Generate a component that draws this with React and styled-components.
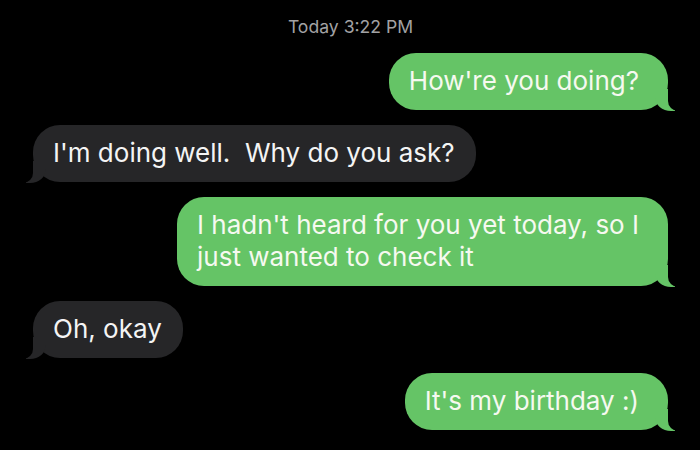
import React from 'react';
import styled, { createGlobalStyle, css } from 'styled-components';

const messages = [
  { id: 1, sent: true, text: "How're you doing?" },
  { id: 2, sent: false, text: "I'm doing well.  Why do you ask?" },
  { id: 3, sent: true, text: "I hadn't heard for you yet today, so I\njust wanted to check it" },
  { id: 4, sent: false, text: 'Oh, okay' },
  { id: 5, sent: true, text: "It's my birthday :)" },
];

export default function App() {
  return (
    <>
      <GlobalStyle />
      <Thread>
        <Stamp>
          Today <b>3:22 PM</b>
        </Stamp>
        {messages.map((m) => (
          <Bubble key={m.id} $sent={m.sent}>
            {m.text}
          </Bubble>
        ))}
      </Thread>
    </>
  );
}

const GlobalStyle = createGlobalStyle`
  html, body {
    margin: 0;
    background: #000;
  }
  #root {
    height: 450px;
  }
`;

const Thread = styled.div`
  display: flex;
  flex-direction: column;
  gap: 15px;
  height: 450px;
  box-sizing: border-box;
  padding: 17px 32px 0 33px;
  background: #000;
  overflow: hidden;
  font-family: Inter, 'Liberation Sans', sans-serif;
`;

const Stamp = styled.div`
  align-self: center;
  margin-bottom: 1px;
  font-size: 17.6px;
  line-height: 20px;
  color: #a2a2a4;

  b {
    font-weight: 400;
  }
`;

// tail drawn with two pseudo elements: a coloured blob and a black cut-out
const sentTail = css`
  background: #65c466;
  color: #f6f9f0;
  align-self: flex-end;
  padding-right: 29px;

  &::before {
    right: -7px;
    background: #65c466;
    border-bottom-left-radius: 16px 14px;
  }
  &::after {
    right: -12px;
    border-bottom-left-radius: 10px;
  }
`;

const receivedTail = css`
  background: #262628;
  color: #f4f4f4;
  align-self: flex-start;

  &::before {
    left: -7px;
    background: #262628;
    border-bottom-right-radius: 16px 14px;
  }
  &::after {
    left: -12px;
    border-bottom-right-radius: 10px;
  }
`;

const Bubble = styled.div`
  position: relative;
  padding: 12px 21px 13px 20px;
  border-radius: 27px;
  font-size: 26px;
  line-height: 32px;
  white-space: pre-wrap;

  &::before,
  &::after {
    content: '';
    position: absolute;
    bottom: -1px;
    height: 22px;
  }
  &::before {
    width: 20px;
  }
  &::after {
    width: 12px;
    background: #000;
  }

  ${(p) => (p.$sent ? sentTail : receivedTail)}
`;
